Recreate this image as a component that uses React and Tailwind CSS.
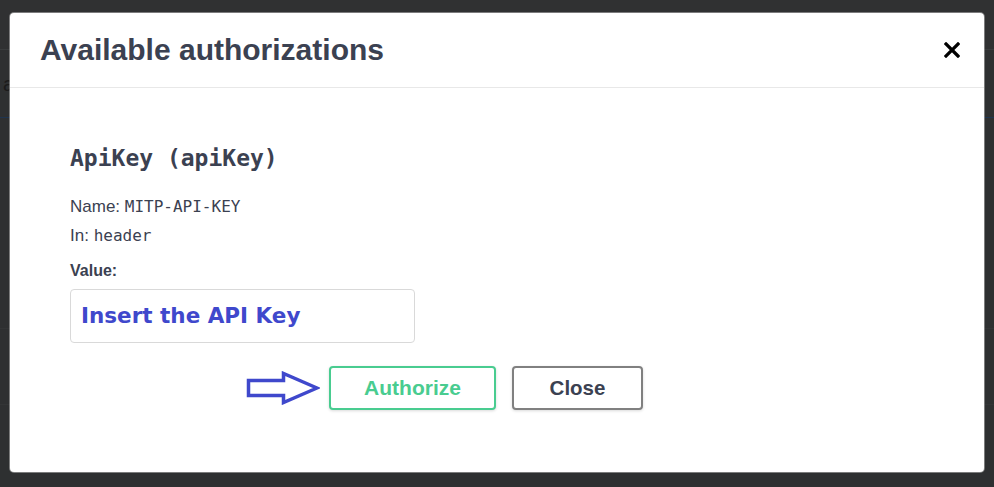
import React from "react";

function Arrow() {
  return (
    <svg width="74" height="34" viewBox="0 0 74 34" className="shrink-0">
      <path
        d="M2.5 9.5 H37.5 V2.5 L71 17 L37.5 31.5 V24.5 H2.5 Z"
        fill="none"
        stroke="#3f48cc"
        strokeWidth="3.5"
        strokeLinejoin="miter"
      />
    </svg>
  );
}

function CloseIcon() {
  return (
    <svg width="16" height="16" viewBox="0 0 16 16">
      <path d="M2 2 L14 14 M14 2 L2 14" stroke="#000" strokeWidth="3.2" strokeLinecap="square" />
    </svg>
  );
}

export default function App() {
  return (
    <div className="relative w-[994px] h-[487px] overflow-hidden bg-[#2e3031] font-['Liberation_Sans',Arial,sans-serif]">
      {/* page behind the overlay */}
      <div className="flex flex-col">
        <div className="h-[50px] bg-[#303132] border-b border-[#3a3c3d]" />
        <div className="h-[68px] border-b border-[#1f3550] flex items-center pl-[3px] text-[#1a1a1a] text-[20px]">a</div>
        <div className="h-[211px] border-b border-[#333536]" />
        <div className="h-[76px] border-b border-[#333536]" />
      </div>

      {/* modal */}
      <div className="absolute left-[10px] top-[13px] w-[974px] h-[459px] bg-white rounded-[4px] shadow-[0_0_0_1px_rgba(200,200,200,0.5)] flex flex-col">
        <div className="h-[75px] shrink-0 border-b border-[#e8e8e8] flex items-center justify-between pl-[30px] pr-[24px]">
          <h4 className="text-[30px] font-bold text-[#3b4151] leading-none">Available authorizations</h4>
          <CloseIcon />
        </div>

        <div className="flex flex-col pl-[60px] pt-[56px]">
          <h4 className="font-['DejaVu_Sans_Mono',monospace] font-bold text-[23px] leading-[28px] text-[#3b4151]">
            ApiKey&nbsp;(apiKey)
          </h4>
          <div className="mt-[20px] text-[17px] leading-[29px] text-[#3b4151]">
            <p>
              Name: <span className="font-['DejaVu_Sans_Mono',monospace] text-[16px]">MITP-API-KEY</span>
            </p>
            <p>
              In: <span className="font-['DejaVu_Sans_Mono',monospace] text-[16px]">header</span>
            </p>
          </div>
          <label className="mt-[11px] text-[16px] leading-[20px] font-bold text-[#3b4151]">Value:</label>
          <div className="mt-[8px] w-[345px] h-[54px] border border-[#d9d9d9] rounded-[4px] flex items-center pl-[10px]">
            <span className="font-['DejaVu_Sans',sans-serif] font-bold text-[21.5px] text-[#3f48cc]">Insert the API Key</span>
          </div>
          <div className="mt-[23px] ml-[176px] flex items-center">
            <Arrow />
            <button className="ml-[9px] w-[167px] h-[44px] border-2 border-[#49cc90] rounded-[4px] text-[#49cc90] font-bold text-[21px] shadow-[0_1px_3px_rgba(0,0,0,0.15)] bg-white">
              Authorize
            </button>
            <button className="ml-[16px] w-[131px] h-[44px] border-2 border-[#808080] rounded-[4px] text-[#3b4151] font-bold text-[20.5px] shadow-[0_1px_3px_rgba(0,0,0,0.15)] bg-white">
              Close
            </button>
          </div>
        </div>
      </div>
    </div>
  );
}
